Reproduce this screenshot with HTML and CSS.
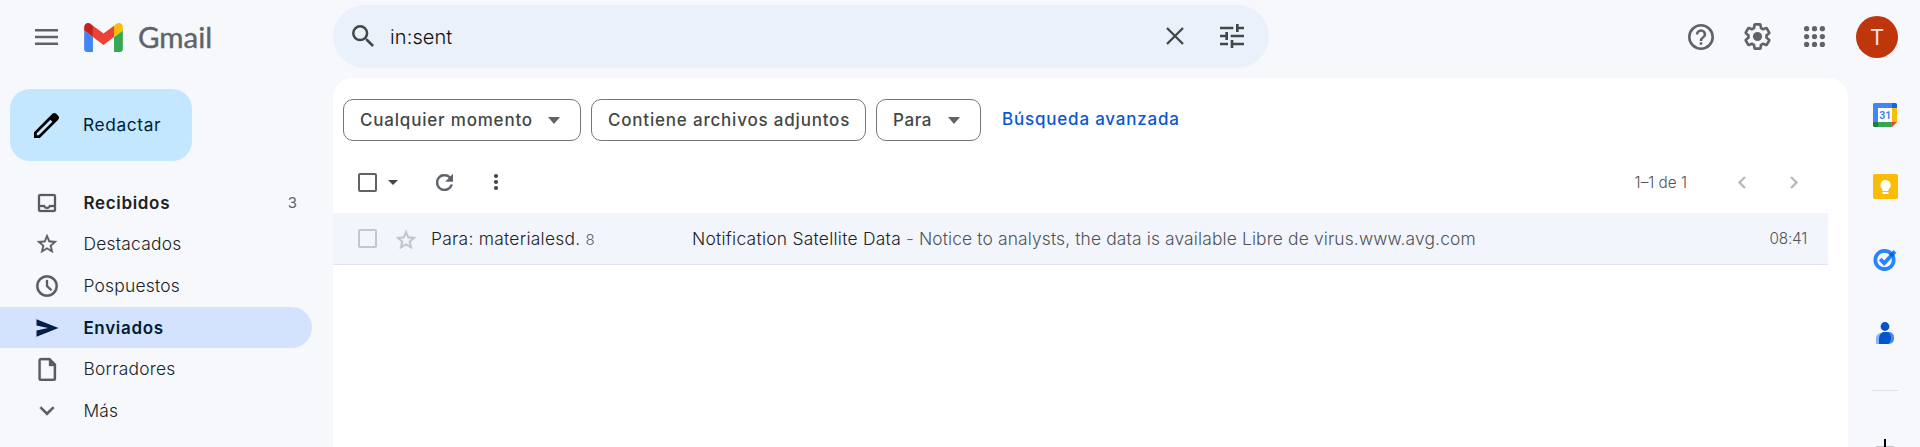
FILE: index.html
```html
<!DOCTYPE html>
<html lang="es">
<head>
<meta charset="utf-8">
<title>Gmail</title>
<link rel="stylesheet" href="styles.css">
</head>
<body>
<div class="app">
  <header class="header">
    <div class="brand">
      <svg class="menu-icon" viewBox="0 0 23 16" width="23" height="16"><path d="M0 0h23v2.4H0zM0 6.8h23v2.4H0zM0 13.6h23V16H0z" fill="#5f6368"/></svg>
      <svg class="logo" viewBox="52 42 88 66" width="39" height="29"><path fill="#4285f4" d="M58 108h14V74L52 59v43c0 3.32 2.69 6 6 6"/><path fill="#34a853" d="M120 108h14c3.32 0 6-2.69 6-6V59l-20 15"/><path fill="#fbbc04" d="M120 48v26l20-15v-8c0-7.42-8.47-11.65-14.4-7.2"/><path fill="#ea4335" d="M72 74V48l24 18 24-18v26L96 92"/><path fill="#c5221f" d="M52 51v8l20 15V48l-5.6-4.2c-5.94-4.45-14.4-.22-14.4 7.2"/></svg>
      <span class="wordmark">Gmail</span>
    </div>
    <div class="search">
      <svg class="search-icon" viewBox="3 3 17.5 17.5" width="22" height="22"><path fill="#444746" d="M15.5 14h-.79l-.28-.27A6.47 6.47 0 0 0 16 9.5 6.5 6.5 0 1 0 9.5 16c1.61 0 3.09-.59 4.23-1.57l.27.28v.79l5 4.99L20.49 19l-4.99-5zm-6 0a4.5 4.5 0 1 1 0-9 4.5 4.5 0 0 1 0 9z"/></svg>
      <span class="query">in:sent</span>
      <svg class="clear-icon" viewBox="0 0 18 18" width="18" height="18"><path d="M1 1l16 16M17 1L1 17" stroke="#444746" stroke-width="2.3"/></svg>
      <svg viewBox="3 3 18 18" width="24" height="24"><path fill="#444746" d="M3 17v2h6v-2H3zM3 5v2h10V5H3zm10 16v-2h8v-2h-8v-2h-2v6h2zM7 9v2H3v2h4v2h2V9H7zm14 4v-2H11v2h10zm-6-4h2V7h4V5h-4V3h-2v6z"/></svg>
    </div>
    <div class="account">
      <svg viewBox="2 2 20 20" width="26" height="26"><path fill="#5f6368" d="M11 18h2v-2h-2v2zm1-16a10 10 0 1 0 0 20 10 10 0 0 0 0-20zm0 18a8 8 0 1 1 0-16 8 8 0 0 1 0 16zm0-14a4 4 0 0 0-4 4h2a2 2 0 1 1 4 0c0 2-3 1.75-3 5h2c0-2.25 3-2.5 3-5a4 4 0 0 0-4-4z"/></svg>
      <svg viewBox="1.700 1.700 20.600 20.600" width="27" height="27"><path fill="#5f6368" d="M13.85 22.25h-3.7c-.74 0-1.36-.54-1.45-1.27l-.27-1.89c-.27-.14-.53-.29-.79-.46l-1.8.72c-.7.26-1.47-.03-1.81-.65L2.2 15.53c-.35-.66-.2-1.44.36-1.88l1.53-1.19c-.01-.15-.02-.3-.02-.46 0-.15.01-.31.02-.46l-1.52-1.19c-.59-.45-.74-1.26-.37-1.88l1.85-3.19c.34-.62 1.11-.9 1.79-.63l1.81.73c.26-.17.52-.32.78-.46l.27-1.91c.09-.7.71-1.25 1.44-1.25h3.7c.74 0 1.36.54 1.45 1.27l.27 1.89c.27.14.53.29.79.46l1.8-.72c.71-.26 1.48.03 1.82.65l1.84 3.18c.36.66.2 1.44-.36 1.88l-1.52 1.19c.01.15.02.3.02.46s-.01.31-.02.46l1.52 1.19c.56.45.72 1.23.37 1.86l-1.86 3.22c-.34.62-1.11.9-1.8.63l-1.8-.72c-.26.17-.52.32-.78.46l-.27 1.91c-.1.68-.72 1.22-1.46 1.22zm-3.23-2h2.76l.37-2.55.53-.22c.44-.18.88-.44 1.34-.78l.45-.34 2.38.96 1.38-2.4-2.03-1.58.07-.56c.03-.26.06-.51.06-.78s-.03-.53-.06-.78l-.07-.56 2.03-1.58-1.39-2.4-2.39.96-.45-.35c-.42-.32-.87-.58-1.33-.77l-.52-.22-.37-2.55h-2.76l-.37 2.55-.53.21c-.44.19-.88.44-1.34.79l-.45.33-2.38-.95-1.39 2.39 2.03 1.58-.07.56a7 7 0 0 0-.06.79c0 .26.02.53.06.78l.07.56-2.03 1.58 1.38 2.4 2.39-.96.45.35c.43.33.86.58 1.33.77l.53.22.38 2.55z"/><circle cx="12" cy="12" r="3.5" fill="#5f6368"/></svg>
      <svg viewBox="4 4 16 16" width="21" height="21"><path fill="#5f6368" d="M6 8a2 2 0 1 0 0-4 2 2 0 0 0 0 4zm6 12a2 2 0 1 0 0-4 2 2 0 0 0 0 4zm-6 0a2 2 0 1 0 0-4 2 2 0 0 0 0 4zm0-6a2 2 0 1 0 0-4 2 2 0 0 0 0 4zm6 0a2 2 0 1 0 0-4 2 2 0 0 0 0 4zm4-8a2 2 0 1 0 4 0 2 2 0 0 0-4 0zm-4 2a2 2 0 1 0 0-4 2 2 0 0 0 0 4zm6 6a2 2 0 1 0 0-4 2 2 0 0 0 0 4zm0 6a2 2 0 1 0 0-4 2 2 0 0 0 0 4z"/></svg>
      <span class="avatar">T</span>
    </div>
  </header>

  <aside class="sidebar">
    <button class="compose">
      <svg viewBox="3 3 18 18" width="25" height="25"><path d="M20.41 4.94l-1.35-1.35c-.78-.78-2.05-.78-2.83 0L3 16.82V21h4.18L20.41 7.77c.79-.78.79-2.05 0-2.83zm-14 14.12L5 19v-1.36l9.82-9.82 1.41 1.41-9.82 9.83z"/></svg>
      <span>Redactar</span>
    </button>
    <nav class="nav">
      <a class="nav-item unread"><svg viewBox="0 0 24 24"><path d="M19 3H5a2 2 0 0 0-2 2v14c0 1.1.9 2 2 2h14a2 2 0 0 0 2-2V5a2 2 0 0 0-2-2zm0 16H5v-3h3.56c.69 1.19 1.97 2 3.45 2s2.75-.81 3.45-2H19v3zm0-5h-4.99c0 1.1-.9 2-2 2s-2-.9-2-2H5V5h14v9z"/></svg><span>Recibidos</span><span class="count">3</span></a>
      <a class="nav-item"><svg viewBox="0 0 24 24"><path d="M22 9.24l-7.19-.62L12 2 9.19 8.63 2 9.24l5.46 4.73L5.82 21 12 17.27 18.18 21l-1.63-7.03L22 9.24zM12 15.4l-3.76 2.27 1-4.28-3.32-2.88 4.38-.38L12 6.1l1.71 4.04 4.38.38-3.32 2.88 1 4.28L12 15.4z"/></svg><span>Destacados</span></a>
      <a class="nav-item"><svg viewBox="0 0 24 24"><path d="M12 1.2a10.8 10.8 0 1 0 0 21.6 10.8 10.8 0 0 0 0-21.6zm0 19.4a8.6 8.6 0 1 1 0-17.2 8.6 8.6 0 0 1 0 17.2zM13 6h-2v6.4l4.7 4.6 1.4-1.4-4.1-4z"/></svg><span>Pospuestos</span></a>
      <a class="nav-item active"><svg viewBox="0 0 24 24"><path d="M1.500 3.200L23.500 12l-22 8.800v-6.300L13 12 1.500 9.500z"/></svg><span>Enviados</span></a>
      <a class="nav-item"><svg viewBox="0 0 24 24"><path d="M15 1H6a2.500 2.500 0 0 0-2.500 2.500v18A2.500 2.500 0 0 0 6 24h12.500a2.500 2.500 0 0 0 2.500-2.500V7zm3.800 20.800H5.700V3.200H14V9h4.800z"/></svg><span>Borradores</span></a>
      <a class="nav-item"><svg viewBox="0 0 24 24"><path d="M17.800 7.500L12 13.100 6.200 7.500 4.600 9.100 12 16.500l7.400-7.400z"/></svg><span>Más</span></a>
    </nav>
  </aside>

  <main class="panel">
    <div class="chips">
      <span class="chip chip-time">Cualquier momento<i class="caret"></i></span>
      <span class="chip chip-files">Contiene archivos adjuntos</span>
      <span class="chip chip-to">Para<i class="caret"></i></span>
      <a class="advanced">Búsqueda avanzada</a>
    </div>
    <div class="toolbar">
      <span class="box"></span>
      <i class="caret small"></i>
      <svg class="refresh" viewBox="4 4 16 16" width="17" height="17"><path fill="#5f6368" stroke="#5f6368" stroke-width=".4" d="M17.650 6.350A8 8 0 1 0 19.730 14h-2.080A6 6 0 1 1 12 6c1.660 0 3.140.69 4.220 1.780L13 11h7V4z"/></svg>
      <svg class="more" viewBox="0 0 6 18" width="6" height="18"><g fill="#444746"><circle cx="3" cy="3" r="2.100"/><circle cx="3" cy="9" r="2.100"/><circle cx="3" cy="15" r="2.100"/></g></svg>
      <span class="range">1–1 de 1</span>
      <svg class="prev" viewBox="0 0 8 13" width="8" height="13"><path d="M7 1L1.500 6.500 7 12" fill="none" stroke="#b7b9bb" stroke-width="2.300"/></svg>
      <svg class="next" viewBox="0 0 8 13" width="8" height="13"><path d="M1 1l5.500 5.500L1 12" fill="none" stroke="#b7b9bb" stroke-width="2.300"/></svg>
    </div>
    <div class="mail">
      <span class="box light"></span>
      <svg class="star" viewBox="2 2 20 19" width="20" height="19"><path fill="#c0c3c8" stroke="#c0c3c8" stroke-width=".4" d="M22 9.240l-7.190-.62L12 2 9.190 8.630 2 9.240l5.460 4.730L5.820 21 12 17.270 18.180 21l-1.630-7.030L22 9.240zM12 15.400l-3.760 2.270 1-4.280-3.320-2.880 4.380-.38L12 6.100l1.710 4.040 4.380.38-3.320 2.880 1 4.280L12 15.400z"/></svg>
      <span class="to">Para: materialesd.<span class="thread">8</span></span>
      <span class="subject">Notification Satellite Data</span>
      <span class="dash">-</span>
      <span class="snippet">Notice to analysts, the data is available Libre de virus.www.avg.com</span>
      <time class="time">08:41</time>
    </div>
  </main>

  <aside class="rail">
    <svg class="calendar" viewBox="0 0 24 24" width="24" height="24"><path fill="#4285f4" d="M1.500 0H19v5H5v14H0V1.500A1.500 1.500 0 0 1 1.500 0z"/><path fill="#1967d2" d="M19 0h3.500A1.500 1.500 0 0 1 24 1.500V5h-5z"/><path fill="#fbbc04" d="M19 5h5v14h-5z"/><path fill="#34a853" d="M5 19h14v5H5z"/><path fill="#188038" d="M0 19h5v5H1.500A1.500 1.500 0 0 1 0 22.500z"/><path fill="#ea4335" d="M19 19h5l-5 5z"/><path fill="#fff" d="M5 5h14v14H5z"/><text class="calendar-day" x="12.200" y="16.200" text-anchor="middle">31</text></svg>
    <svg class="keep" viewBox="0 0 25 25" width="25" height="25"><rect width="25" height="25" rx="2" fill="#fbbc04"/><path fill="#fff" d="M12.500 6a5.200 5.200 0 0 0-3 9.400V17h6v-1.600a5.200 5.200 0 0 0-3-9.400zM9.500 18h6v2h-6z"/></svg>
    <svg class="tasks" viewBox="0 0 24 24" width="24" height="24"><circle cx="11.500" cy="13" r="9.200" fill="none" stroke="#2684fc" stroke-width="3.700"/><path d="M7.200 12.200l4 4L22 4.400" fill="none" stroke="#2684fc" stroke-width="3.800"/><path d="M16.200 7.600l3-2.900 2.400 3.200-2.600 2.500z" fill="#0066da"/></svg>
    <svg class="contacts" viewBox="0 0 18 22" width="18" height="22"><path fill="#8ab0fb" d="M5 11h4v11H0v-5a6 6 0 0 1 5-6z"/><path fill="#4f86f7" d="M9 10h4a5 5 0 0 1 5 5v2a5 5 0 0 1-5 5H9z"/><path fill="#0057cc" d="M7 10h5q3 2 3 6t-3 6H3v-5q0-5 4-7z"/><circle cx="9" cy="4.500" r="4.400" fill="#0057cc"/></svg>
    <span class="divider"></span>
    <svg class="plus" viewBox="0 0 18 18" width="18" height="18"><path fill="#c4c6ca" d="M0 7h18v1H0z"/><path d="M8 0h2v18H8zM0 8h18v2H0z"/></svg>
  </aside>
</div>
</body>
</html>
```
FILE: styles.css
```css
* { box-sizing: border-box; }
body { margin: 0; background: #f6f8fc; font-family: Inter, Roboto, sans-serif; color: #202124; }
svg { display: block; flex: none; }
.app { display: grid; grid-template-columns: 333px 1515px 72px; grid-template-rows: 78px 369px; height: 447px; width: 1920px; overflow: hidden; white-space: nowrap; }

.header { grid-column: 1 / -1; display: flex; align-items: flex-start; }
.brand { width: 333px; height: 73px; padding-left: 35px; display: flex; align-items: center; }
.logo { margin: 2px 15px 0 26px; }
.wordmark { font-family: Lato, sans-serif; font-size: 29.5px; line-height: 36px; color: #5f6368; margin-top: 1px; -webkit-text-stroke: 0.4px #5f6368; }
.search { width: 936px; height: 63px; margin-top: 5px; padding: 0 25px 2px 19px; border-radius: 32px; background: #eaf1fb; display: flex; align-items: center; }
.query { font-size: 20px; font-weight: 300; margin: 2px 0 0 16px; letter-spacing: 0.1px; flex: 1; color: #101010; }
.clear-icon { margin-right: 36px; }
.account { margin-left: auto; height: 73px; padding-right: 22px; display: flex; align-items: center; }
.account svg:nth-child(1) { margin-right: 30px; }
.account svg:nth-child(2) { margin-right: 33px; }
.account svg:nth-child(3) { margin-right: 31px; }
.avatar { width: 42px; height: 42px; border-radius: 50%; background: #bf360c; color: #f9e5de; font-size: 22px; line-height: 43px; text-align: center; }

.sidebar { padding-top: 11px; }
.compose { display: flex; align-items: center; width: 182px; height: 72px; margin: 0 0 0 10px; padding: 0 0 0 24px; gap: 24px; border: 0; border-radius: 20px; background: #c2e7ff; color: #001d35; font: 17.3px Inter, sans-serif; letter-spacing: 0.65px; }
.compose span { padding-bottom: 2px; }
.nav { padding-top: 21px; width: 312px; }
.nav-item { display: flex; align-items: center; height: 41.6px; padding: 0 15px 1px 35px; border-radius: 0 21px 21px 0; font-size: 17.4px; font-weight: 300; letter-spacing: 0.25px; color: #202124; }
.nav-item svg { width: 24px; height: 24px; margin: 1px 24.4px 0 0; fill: #5a5d5f; stroke: #5a5d5f; stroke-width: 0.3px; }
.nav-item.unread { padding-bottom: 0; font-size: 17px; font-weight: 600; letter-spacing: 0.68px; color: #202124; }
.nav-item.active { padding-bottom: 0; font-size: 17px; font-weight: 600; letter-spacing: 0.68px; color: #001d35; background: #d3e3fd; }
.nav-item.active svg { fill: #041e49; stroke: none; }
.count { margin-left: auto; font-size: 15px; font-weight: 400; letter-spacing: 0; color: #5f6368; }

.panel { background: #fff; border-radius: 20px 20px 0 0; padding-top: 21px; }
.chips { display: flex; align-items: center; height: 42px; gap: 10px; padding-left: 10px; }
.chip { height: 42px; border: 1px solid #747775; border-radius: 10px; padding: 0 16px; display: flex; align-items: center; justify-content: space-between; font-size: 17px; font-weight: 450; letter-spacing: 0.8px; color: #444746; }
.chip-time { width: 238px; padding-right: 20px; }
.chip-files { width: 275px; }
.chip-to { width: 105px; padding-right: 20px; letter-spacing: 0.6px; }
.advanced { font-size: 17px; font-weight: 450; letter-spacing: 0.8px; color: #0b57d0; margin-left: 11px; margin-top: -2px; }
.caret { border: 6px solid transparent; border-top: 7px solid #5f6368; border-bottom: 0; }
.caret.small { border-width: 5px; border-top-width: 5px; border-bottom: 0; margin-left: 11px; border-top-color: #444746; }

.toolbar { display: flex; align-items: center; height: 72px; padding: 10px 50px 0 25px; }
.box { width: 19px; height: 19px; border: 2px solid #5f6368; border-radius: 2px; flex: none; }
.box.light { border-color: #c3c6cb; }
.refresh { margin-left: 38px; }
.more { margin-left: 40px; }
.range { margin-left: auto; font-size: 15.3px; font-weight: 300; color: #505357; }
.prev { margin: 0 44px 0 51px; }

.mail { display: flex; align-items: center; width: 1495px; height: 52px; padding: 0 21px 0 25px; background: #f2f6fc; border-bottom: 1px solid #dfe5ee; font-size: 17.4px; font-weight: 300; }
.star { margin: 2px 0 0 19px; }
.to { width: 260px; margin-left: 15px; letter-spacing: 0.28px; }
.thread { font-size: 15px; color: #5f6368; margin-left: 5px; }
.subject { letter-spacing: 0.27px; margin-left: 1px; }
.dash { margin: 0 5px; color: #5f6368; }
.snippet { color: #505357; letter-spacing: 0.14px; }
.time { margin-left: auto; font-size: 15.3px; letter-spacing: -0.2px; color: #505357; }

.rail { display: flex; flex-direction: column; align-items: center; padding: 25px 0 0 2px; }
.calendar-day { font: 700 10.5px Roboto, sans-serif; fill: #4285f4; }
.keep { margin-top: 47px; }
.tasks { margin-top: 48px; }
.contacts { margin-top: 51px; }
.divider { width: 26px; height: 1px; background: #dfe1e5; margin: 46px 0 48px; flex: none; }
```
